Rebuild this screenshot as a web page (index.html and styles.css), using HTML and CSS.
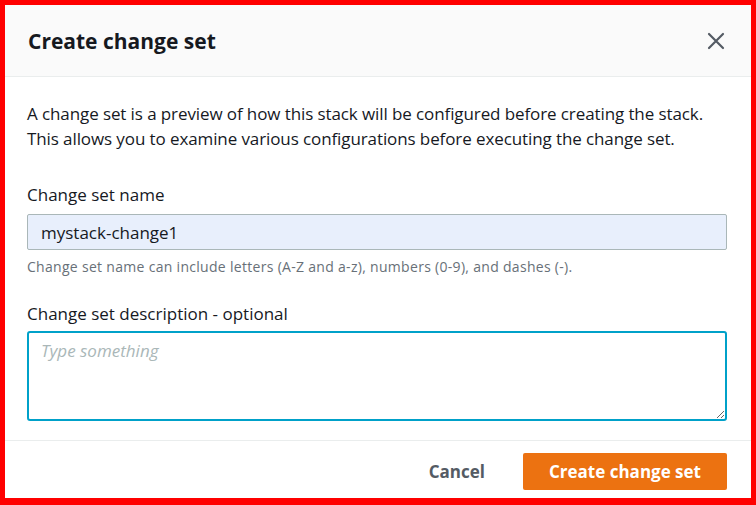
FILE: index.html
```
<!DOCTYPE html>
<html lang="en">
<head>
    <meta charset="UTF-8">
    <meta name="viewport" content="width=device-width, initial-scale=1.0">
    <title>Create change set</title>
    <link rel="stylesheet" href="styles.css">
</head>
<body>
    <div class="frame">
        <div class="modal">
            <div class="modal-header">
                <h2>Create change set</h2>
                <button class="close-btn" aria-label="Close">
                    <svg width="18" height="18" viewBox="0 0 18 18">
                        <path d="M2 2 L16 16 M16 2 L2 16" stroke="#545b64" stroke-width="2.2" fill="none" stroke-linecap="round"/>
                    </svg>
                </button>
            </div>

            <div class="modal-body">
                <p class="intro">A change set is a preview of how this stack will be configured before creating the stack. This allows you to examine various configurations before executing the change set.</p>

                <div class="field">
                    <label for="csName">Change set name</label>
                    <input type="text" id="csName" class="text-input" value="mystack-change1">
                    <div class="hint">Change set name can include letters (A-Z and a-z), numbers (0-9), and dashes (-).</div>
                </div>

                <div class="field">
                    <label for="csDesc">Change set description - optional</label>
                    <textarea id="csDesc" class="text-area" placeholder="Type something" autofocus></textarea>
                </div>
            </div>

            <div class="modal-footer">
                <button class="btn-link">Cancel</button>
                <button class="btn-primary">Create change set</button>
            </div>
        </div>
    </div>
</body>
</html>
```

FILE: styles.css
```
* {
    box-sizing: border-box;
}

body {
    margin: 0;
    font-family: "Open Sans", "Noto Sans", sans-serif;
    color: #16191f;
}

.frame {
    width: 756px;
    height: 505px;
    border: 5px solid #ff0000;
    border-bottom-width: 7px;
    background-color: white;
    overflow: hidden;
}

.modal-header {
    display: flex;
    justify-content: space-between;
    align-items: center;
    height: 72px;
    padding: 0 26px 0 23px;
    background-color: #fafafa;
    border-bottom: 1px solid #eaeded;
}

.modal-header h2 {
    margin: 0;
    font-size: 21px;
    font-weight: bold;
    color: #16191f;
}

.close-btn {
    border: none;
    background: none;
    padding: 0;
    display: flex;
    cursor: pointer;
}

.modal-body {
    padding: 24px 24px 19px 22px;
    border-bottom: 1px solid #eaeded;
}

.intro {
    margin: 0 0 33px 0;
    font-size: 17px;
    line-height: 25px;
    letter-spacing: -0.1px;
}

.field {
    margin-bottom: 27px;
}

.field:last-child {
    margin-bottom: 0;
}

.field label {
    display: block;
    font-size: 17px;
    line-height: 22px;
    margin-bottom: 8px;
}

.text-input {
    display: block;
    width: 100%;
    height: 36px;
    padding: 0 13px;
    font-family: inherit;
    font-size: 17px;
    color: #16191f;
    background-color: #e8effc;
    border: 1px solid #aab7b8;
    border-radius: 2px;
}

.hint {
    margin-top: 8px;
    font-size: 14px;
    line-height: 18px;
    letter-spacing: 0.3px;
    color: #687078;
}

.text-area {
    display: block;
    width: 100%;
    height: 90px;
    margin-top: -2px;
    padding: 7px 12px;
    font-family: inherit;
    font-size: 17px;
    line-height: 22px;
    color: #16191f;
    border: 2px solid #00a1c9;
    border-radius: 3px;
    outline: none;
}

.text-area::placeholder {
    font-style: italic;
    color: #aab7b8;
}

.modal-footer {
    display: flex;
    justify-content: flex-end;
    align-items: center;
    gap: 18px;
    padding: 12px 24px 8px 23px;
}

.btn-link {
    border: none;
    background: none;
    padding: 0 20px;
    font-family: inherit;
    font-size: 17px;
    font-weight: bold;
    color: #545b64;
}

.btn-primary {
    height: 37px;
    padding: 0 26px;
    border: none;
    border-radius: 2px;
    background-color: #ec7211;
    color: white;
    font-family: inherit;
    font-size: 17px;
    font-weight: bold;
}
```
